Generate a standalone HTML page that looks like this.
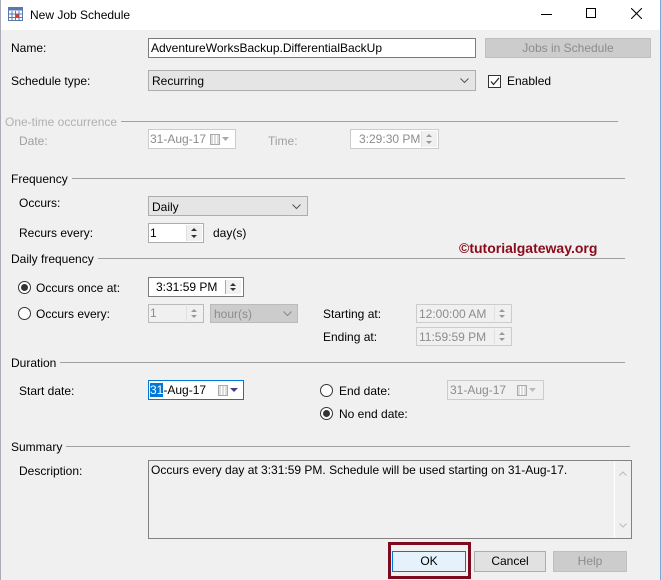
<!DOCTYPE html>
<html><head><meta charset="utf-8"><style>
*{box-sizing:border-box;margin:0;padding:0}
body{width:661px;height:580px;overflow:hidden;background:#f0f0f0;font-family:"Liberation Sans",sans-serif;font-size:12px;color:#000;position:relative}
.a{position:absolute;white-space:nowrap;line-height:14px}
.g{color:#a0a0a0}
.h{background:#f0f0f0;padding-right:4px;z-index:2}
.box{position:absolute;background:#fff;border:1px solid #7a7a7a}
.dis{position:absolute;background:#f0f0f0;border:1px solid #ccc;color:#8c8c8c}
.line{position:absolute;height:1px;background:#a0a0a0;z-index:1}
.sel{position:absolute;background:#e5e5e5;border:1px solid #adadad}
.radio{position:absolute;width:13px;height:13px;border:1px solid #333;border-radius:50%;background:#fff}
.radio.on:after{content:"";position:absolute;left:2px;top:2px;width:7px;height:7px;border-radius:50%;background:#333}
.spin{position:absolute;right:1px;top:1px;bottom:1px;width:16px;border-left:1px solid #e0e0e0;background:#f0f0f0}
.spin:before,.spin:after{content:"";position:absolute;left:4px;border-left:3px solid transparent;border-right:3px solid transparent}
.spin:before{top:3px;border-bottom:3px solid #333}
.spin:after{bottom:3px;border-top:3px solid #333}
.spin.d:before{border-bottom-color:#999}.spin.d:after{border-top-color:#999}
.btn{position:absolute;border:1px solid #adadad;background:#e1e1e1;text-align:center;line-height:19px}
.cal{position:absolute;width:10px;height:11px;border:1px solid #aaa;background:repeating-linear-gradient(90deg,#ddd 0 2px,#fff 2px 3px)}
</style></head><body>
<div style="position:absolute;left:0;top:0;width:661px;height:30px;background:#fff"></div>
<svg style="position:absolute;left:8px;top:7px" width="16" height="15"><rect x="0.5" y="0.5" width="14" height="13" fill="#fff" stroke="#5a78b0"/><rect x="0.5" y="0.5" width="14" height="3" fill="#5a78b0"/><path d="M4 4v10M7.5 4v10M11 4v10M1 7h14M1 10.5h14" stroke="#5a78b0"/><rect x="8" y="7.5" width="3" height="3" fill="#d33"/></svg>
<div class="a" style="left:30px;top:8px;font-size:12px">New Job Schedule</div>
<div style="position:absolute;left:541px;top:14px;width:11px;height:1px;background:#000"></div>
<div style="position:absolute;left:586px;top:8px;width:10px;height:10px;border:1px solid #000"></div>
<svg style="position:absolute;left:631px;top:8px" width="11" height="11"><path d="M0 0L11 11M11 0L0 11" stroke="#000"/></svg>

<div class="a" style="left:11px;top:41px">Name:</div>
<div class="box" style="left:148px;top:38px;width:328px;height:20px"><div class="a" style="left:2px;top:2px">AdventureWorksBackup.DifferentialBackUp</div></div>
<div class="btn" style="left:485px;top:38px;width:166px;height:20px;background:#ccc;border-color:#bfbfbf;color:#8c8c8c">Jobs in Schedule</div>

<div class="a" style="left:11px;top:74px">Schedule type:</div>
<div class="sel" style="left:148px;top:70px;width:328px;height:21px"><div class="a" style="left:3px;top:3px">Recurring</div>
<svg style="position:absolute;right:6px;top:7px" width="9" height="6"><path d="M0.5 0.5L4.5 4.5L8.5 0.5" fill="none" stroke="#555"/></svg></div>
<div style="position:absolute;left:488px;top:75px;width:13px;height:13px;border:1px solid #333;background:#fff"></div>
<svg style="position:absolute;left:490px;top:77px" width="10" height="9"><path d="M1 4.5L3.5 7.5L9 1" fill="none" stroke="#222" stroke-width="1.2"/></svg>
<div class="a" style="left:507px;top:74px">Enabled</div>

<div class="a g h" style="left:5px;top:115px;color:#b0b0b0">One-time occurrence</div>
<div class="line" style="left:111px;top:121px;width:507px"></div>
<div class="a g" style="left:19px;top:134px">Date:</div>
<div class="dis" style="left:148px;top:129px;width:88px;height:20px;background:#fff"><div class="a" style="left:1px;top:2px">31-Aug-17</div><div class="cal" style="left:61px;top:4px"></div><svg style="position:absolute;left:73px;top:7px" width="7" height="4"><path d="M0 0h7L3.5 4z" fill="#aaa"/></svg></div>
<div class="a g" style="left:268px;top:134px">Time:</div>
<div class="dis" style="left:350px;top:129px;width:89px;height:20px;background:#fff"><div class="a" style="left:8px;top:2px">3:29:30 PM</div><div class="spin d"></div></div>

<div class="a h" style="left:11px;top:172px">Frequency</div>
<div class="line" style="left:66px;top:178px;width:559px"></div>
<div class="a" style="left:19px;top:196px">Occurs:</div>
<div class="sel" style="left:148px;top:196px;width:160px;height:20px"><div class="a" style="left:3px;top:3px">Daily</div>
<svg style="position:absolute;right:6px;top:7px" width="9" height="6"><path d="M0.5 0.5L4.5 4.5L8.5 0.5" fill="none" stroke="#555"/></svg></div>
<div class="a" style="left:19px;top:226px">Recurs every:</div>
<div class="box" style="left:148px;top:223px;width:56px;height:20px;border-color:#adadad"><div class="a" style="left:1px;top:2px">1</div><div class="spin"></div></div>
<div class="a" style="left:213px;top:226px">day(s)</div>
<div class="a" style="left:459px;top:240px;font-size:14px;font-weight:bold;color:#8b0a1a;line-height:16px">©tutorialgateway.org</div>

<div class="a h" style="left:11px;top:252px">Daily frequency</div>
<div class="line" style="left:89px;top:258px;width:536px"></div>
<div class="radio on" style="left:18px;top:281px"></div>
<div class="a" style="left:36px;top:281px">Occurs once at:</div>
<div class="box" style="left:148px;top:277px;width:96px;height:20px"><div class="a" style="left:7px;top:2px">3:31:59 PM</div><div class="spin" style="border-left:1px solid #aaa;top:2px;bottom:2px;right:2px"></div></div>
<div class="radio" style="left:18px;top:307px"></div>
<div class="a" style="left:36px;top:307px">Occurs every:</div>
<div class="dis" style="left:148px;top:304px;width:56px;height:19px;background:#f0f0f0;border-color:#bbb"><div class="a" style="left:1px;top:1px">1</div><div class="spin d"></div></div>
<div class="dis" style="left:210px;top:304px;width:88px;height:19px;background:#ccc;border-color:#bbb"><div class="a" style="left:3px;top:2px">hour(s)</div>
<svg style="position:absolute;right:5px;top:6px" width="9" height="6"><path d="M0.5 0.5L4.5 4.5L8.5 0.5" fill="none" stroke="#888"/></svg></div>
<div class="a" style="left:323px;top:307px">Starting at:</div>
<div class="dis" style="left:416px;top:304px;width:96px;height:19px;background:#f0f0f0"><div class="a" style="left:2px;top:2px">12:00:00 AM</div><div class="spin d"></div></div>
<div class="a" style="left:323px;top:330px">Ending at:</div>
<div class="dis" style="left:416px;top:327px;width:96px;height:19px;background:#f0f0f0"><div class="a" style="left:2px;top:2px">11:59:59 PM</div><div class="spin d"></div></div>

<div class="a h" style="left:11px;top:356px">Duration</div>
<div class="line" style="left:57px;top:362px;width:568px"></div>
<div class="a" style="left:19px;top:384px">Start date:</div>
<div class="box" style="left:148px;top:380px;width:96px;height:20px;border-color:#0078d7"><div class="a" style="left:1px;top:2px"><span style="background:#0078d7;color:#fff">31</span>-Aug-17</div><div class="cal" style="left:69px;top:4px"></div><svg style="position:absolute;left:81px;top:7px" width="8" height="4"><path d="M0 0h8L4 4z" fill="#4a3a8a"/></svg></div>
<div class="radio" style="left:320px;top:384px"></div>
<div class="a" style="left:339px;top:384px">End date:</div>
<div class="dis" style="left:447px;top:380px;width:97px;height:20px;background:#f0f0f0"><div class="a" style="left:2px;top:2px">31-Aug-17</div><div class="cal" style="left:69px;top:4px"></div><svg style="position:absolute;left:81px;top:7px" width="7" height="4"><path d="M0 0h7L3.5 4z" fill="#bbb"/></svg></div>
<div class="radio on" style="left:320px;top:407px"></div>
<div class="a" style="left:339px;top:407px">No end date:</div>

<div class="a h" style="left:11px;top:440px">Summary</div>
<div class="line" style="left:60px;top:446px;width:570px"></div>
<div class="a" style="left:19px;top:464px">Description:</div>
<div style="position:absolute;left:148px;top:460px;width:484px;height:79px;border:1px solid #828282;background:#f0f0f0">
<div class="a" style="left:2px;top:2px">Occurs every day at 3:31:59 PM. Schedule will be used starting on 31-Aug-17.</div>
<div style="position:absolute;right:0;top:0;width:17px;height:77px;border-left:1px solid #fff;background:#f0f0f0"></div>
<svg style="position:absolute;right:4px;top:10px" width="8" height="5"><path d="M0.5 4.5L4 1L7.5 4.5" fill="none" stroke="#bbb"/></svg>
<svg style="position:absolute;right:4px;bottom:10px" width="8" height="5"><path d="M0.5 0.5L4 4L7.5 0.5" fill="none" stroke="#bbb"/></svg>
</div>

<div style="position:absolute;left:388px;top:542px;width:83px;height:37px;border:3px solid #7d0a1e"></div>
<div class="btn" style="left:392px;top:551px;width:74px;height:21px;background:#e5f1fb;border-color:#0078d7">OK</div>
<div class="btn" style="left:474px;top:551px;width:72px;height:21px">Cancel</div>
<div class="btn" style="left:553px;top:551px;width:74px;height:21px;background:#ccc;border-color:#bfbfbf;color:#8c8c8c">Help</div>
<div style="position:absolute;left:0;top:0;width:1px;height:580px;background:#aab"></div>
<div style="position:absolute;left:660px;top:0;width:1px;height:580px;background:#7ca8d8"></div>
</body></html>
